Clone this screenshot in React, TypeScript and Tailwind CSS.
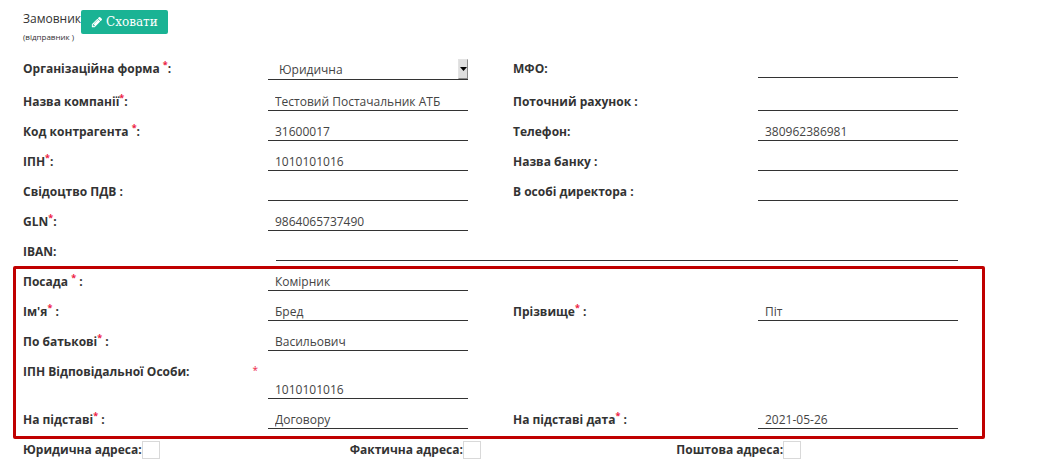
import React, { useId, type ReactNode } from "react";

function Star() {
  return <sup className="-top-[5px] text-[9px] leading-none font-bold text-[#ed1c45]">*</sup>;
}

function Pencil() {
  return (
    <svg viewBox="0 0 1792 1792" className="size-3 shrink-0" fill="currentColor" aria-hidden="true">
      <path d="M491 1536l91-91-235-235-91 91v107h128v128h107zm523-928q0-22-22-22-10 0-17 7l-542 542q-7 7-7 17 0 22 22 22 10 0 17-7l542-542q7-7 7-17zm-54-192l416 416-832 832h-416v-416zm683 96q0 53-37 90l-166 166-416-416 166-165q36-38 90-38 53 0 91 38l235 234q37 39 37 91z" />
    </svg>
  );
}

const cellLabel = "pt-[13px] text-xs leading-4 font-bold text-[#333]";
const line = "block h-[18px] w-full border-b border-[#333] bg-transparent px-[7px] text-xs text-[#444] outline-none";

function Field({ label, value = "" }: { label: ReactNode; value?: string }) {
  const id = useId();
  return (
    <>
      <label htmlFor={id} className={cellLabel}>{label}</label>
      <div className="flex items-end pr-[45px]">
        <input id={id} type="text" defaultValue={value} className={line} />
      </div>
    </>
  );
}

function AddressCheck({ label }: { label: string }) {
  return (
    <label className="flex items-center text-xs leading-4 font-bold text-[#333]">
      {label}
      <input type="checkbox" className="size-[18px] appearance-none border border-[#d9d9d9] bg-white checked:bg-[#1ab394]" />
    </label>
  );
}

const row = "grid min-h-[30px] grid-cols-4";

export default function App() {
  return (
    <form className="bg-white pt-2.5 pr-12 pb-3 pl-[23px] font-['Open_Sans','Noto_Sans',sans-serif] text-[#333]">
      <header className="flex h-[39px] items-start">
        <div>
          <div className="text-xs leading-[18px]">Замовник</div>
          <div className="text-[8px] leading-[18px]">(відправник )</div>
        </div>
        <button
          type="button"
          className="flex h-6 items-center gap-[3px] rounded-[2px] bg-[#1ab394] px-2.5 font-['DejaVu_Serif',serif] text-xs text-white"
        >
          <Pencil />
          Сховати
        </button>
      </header>

      <div className="grid h-8 grid-cols-4">
        <label htmlFor="form-kind" className="pt-3 text-xs leading-4 font-bold">
          Організаційна форма <Star />:
        </label>
        <div className="pt-2.5 pr-[45px]">
          <div className="relative h-[21px] border-b border-[#333]">
            <select id="form-kind" className="block h-5 w-full appearance-none bg-transparent pt-0.5 pl-[11px] text-xs text-[#444] outline-none">
              <option>Юридична</option>
            </select>
            <span className="pointer-events-none absolute top-0 right-0 flex h-5 w-2.5 items-center justify-center border border-t-[#e3e3e3] border-r-[#8a8a8a] border-b-[#8a8a8a] border-l-[#e3e3e3] bg-[#dedede]">
              <svg viewBox="0 0 7 4" className="h-1 w-[7px] shrink-0"><path d="M0 0h7L3.5 4z" fill="#000" /></svg>
            </span>
          </div>
        </div>
        <label htmlFor="mfo" className="pt-3 text-xs leading-4 font-bold">МФО:</label>
        <div className="pt-[11px] pr-[45px]">
          <input id="mfo" type="text" className={line} />
        </div>
      </div>

      <div className={row}>
        <Field label={<>Назва компанії<Star />:</>} value="Тестовий Постачальник АТБ" />
        <Field label="Поточний рахунок :" />
      </div>
      <div className={row}>
        <Field label={<>Код контрагента <Star />:</>} value="31600017" />
        <Field label="Телефон:" value="380962386981" />
      </div>
      <div className={row}>
        <Field label={<>ІПН<Star />:</>} value="1010101016" />
        <Field label="Назва банку :" />
      </div>
      <div className={row}>
        <Field label="Свідоцтво ПДВ :" />
        <Field label="В особі директора :" />
      </div>
      <div className={row}>
        <Field label={<>GLN<Star />:</>} value="9864065737490" />
      </div>
      <div className={row}>
        <label htmlFor="iban" className={cellLabel}>IBAN:</label>
        <div className="col-span-3 flex items-end pr-[45px] pl-2">
          <input id="iban" type="text" className={line} />
        </div>
      </div>

      <section className="relative">
        <div className="pointer-events-none absolute top-[5px] right-[18px] -bottom-2.5 -left-2.5 rounded-[2px] border-3 border-[#c00000]" />
        <div className={row}>
          <Field label={<>Посада <Star /> :</>} value="Комірник" />
        </div>
        <div className={row}>
          <Field label={<>Ім'я<Star /> :</>} value="Бред" />
          <Field label={<>Прізвище<Star /> :</>} value="Піт" />
        </div>
        <div className={row}>
          <Field label={<>По батькові<Star /> :</>} value="Васильович" />
        </div>
        <div className="grid h-12 grid-cols-4">
          <label htmlFor="person-ipn" className="flex justify-between pt-[13px] pr-2.5 text-xs leading-4 font-bold">
            ІПН Відповідальної Особи:
            <span className="text-[10px] leading-3 font-normal text-[#ed1c45]">*</span>
          </label>
          <div className="flex items-end pr-[45px]">
            <input id="person-ipn" type="text" defaultValue="1010101016" className={line} />
          </div>
        </div>
        <div className={row}>
          <Field label={<>На підставі<Star /> :</>} value="Договору" />
          <Field label={<>На підставі дата<Star /> :</>} value="2021-05-26" />
        </div>
      </section>

      <div className="grid grid-cols-3 pt-3">
        <AddressCheck label="Юридична адреса:" />
        <AddressCheck label="Фактична адреса:" />
        <AddressCheck label="Поштова адреса:" />
      </div>
    </form>
  );
}
